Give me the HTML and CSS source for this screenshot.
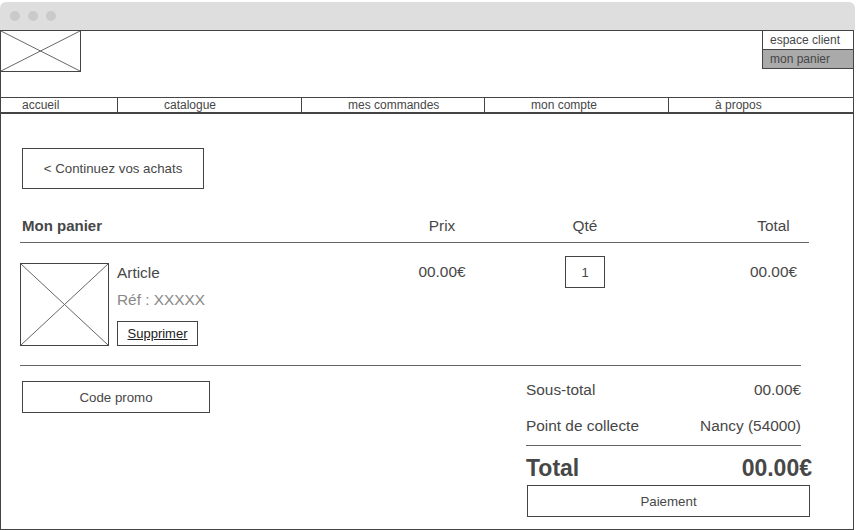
FILE: index.html
```html
<!DOCTYPE html>
<html lang="fr">
<head>
<meta charset="utf-8">
<title>Mon panier</title>
<link rel="stylesheet" href="styles.css">
</head>
<body>
<div class="titlebar">
  <span class="dot"></span><span class="dot"></span><span class="dot"></span>
</div>
<div class="frame">
  <header class="header">
    <div class="logo">
      <svg class="cross" viewBox="0 0 100 100" preserveAspectRatio="none"><line x1="0" y1="0" x2="100" y2="100"/><line x1="100" y1="0" x2="0" y2="100"/></svg>
    </div>
    <div class="account">
      <div class="account-item">espace client</div>
      <div class="account-item active">mon panier</div>
    </div>
  </header>
  <nav class="nav">
    <div class="nav-item first">accueil</div>
    <div class="nav-item">catalogue</div>
    <div class="nav-item">mes commandes</div>
    <div class="nav-item">mon compte</div>
    <div class="nav-item">à propos</div>
  </nav>
  <main class="main">
    <div class="btn btn-back">&lt; Continuez vos achats</div>
    <div class="cart-head">
      <div class="title">Mon panier</div>
      <div class="center">Prix</div>
      <div class="center">Qté</div>
      <div class="col-total">Total</div>
    </div>
    <div class="cart-item">
      <div class="product">
        <div class="thumb">
          <svg class="cross" viewBox="0 0 100 100" preserveAspectRatio="none"><line x1="0" y1="0" x2="100" y2="100"/><line x1="100" y1="0" x2="0" y2="100"/></svg>
        </div>
        <div class="details">
          <div class="name">Article</div>
          <div class="ref">Réf : XXXXX</div>
          <div class="btn btn-del"><span class="u">Supprimer</span></div>
        </div>
      </div>
      <div class="price center">00.00€</div>
      <div class="qty-cell"><div class="qty">1</div></div>
      <div class="price col-total">00.00€</div>
    </div>
    <div class="divider"></div>
    <div class="cart-foot">
      <div class="btn btn-promo">Code promo</div>
      <div class="summary">
        <div class="sum-rows">
          <div class="sum-row"><span>Sous-total</span><span>00.00€</span></div>
          <div class="sum-row"><span>Point de collecte</span><span>Nancy (54000)</span></div>
        </div>
        <div class="sum-total"><span>Total</span><span>00.00€</span></div>
        <div class="btn btn-pay">Paiement</div>
      </div>
    </div>
  </main>
</div>
</body>
</html>
```
FILE: styles.css
```css
* { box-sizing: border-box; }
html, body { margin: 0; padding: 0; }
body {
  width: 856px;
  height: 530px;
  overflow: hidden;
  background: #fff;
  color: #474747;
  font-family: "Liberation Sans", Arial, Helvetica, sans-serif;
}
.titlebar {
  margin-top: 2px;
  width: 855px;
  height: 28px;
  background: #dedede;
  border-radius: 6px 6px 0 0;
  display: flex;
  align-items: center;
  gap: 8px;
  padding-left: 10px;
}
.dot {
  width: 10px;
  height: 10px;
  border-radius: 50%;
  background: #cacaca;
}
.frame {
  width: 854px;
  height: 500px;
  border: 1px solid #444;
  overflow: hidden;
}
.header {
  height: 66px;
  display: flex;
  justify-content: space-between;
  align-items: flex-start;
}
.logo {
  width: 80px;
  height: 41px;
  border-right: 1px solid #444;
  border-bottom: 1px solid #444;
}
.cross { display: block; width: 100%; height: 100%; }
.cross line { stroke: #666; stroke-width: 1; vector-effect: non-scaling-stroke; }
.account {
  width: 91px;
  border-left: 1px solid #444;
  border-bottom: 1px solid #444;
  font-size: 12px;
}
.account-item {
  height: 18px;
  line-height: 18px;
  padding-left: 7px;
}
.account-item.active {
  height: 19px;
  background: #aaa;
  border-top: 1px solid #444;
}
.nav {
  display: grid;
  grid-template-columns: 116px 184px 183px 184px 185px;
  border-top: 1px solid #444;
  border-bottom: 2px solid #444;
  font-size: 12px;
  line-height: 14px;
}
.nav-item {
  padding-left: 46px;
  border-left: 1px solid #444;
  white-space: nowrap;
}
.nav-item.first { padding-left: 21px; border-left: none; }
.main { padding: 34px 0 0 19px; }
.btn {
  border: 1px solid #444;
  background: #fff;
  font-size: 13.3px;
  display: flex;
  align-items: center;
  justify-content: center;
  color: #474747;
}
.btn-back { width: 182px; height: 41px; margin-left: 2px; }
.cart-head, .cart-item {
  display: grid;
  grid-template-columns: 372px 100px 186px 131px;
  width: 789px;
  font-size: 15.4px;
  line-height: 17px;
}
.cart-head {
  margin-top: 28px;
  padding-bottom: 8px;
  border-bottom: 1px solid #666;
}
.title { font-weight: bold; font-size: 15px; padding-left: 2px; }
.center { text-align: center; }
.col-total { text-align: center; padding-left: 60px; }
.product {
  display: flex;
  gap: 8px;
  padding: 20px 0 19px;
}
.thumb {
  width: 89px;
  height: 83px;
  border: 1px solid #444;
}
.details { padding-top: 1px; }
.ref { margin-top: 10px; color: #888; }
.btn-del {
  margin-top: 13px;
  width: 81px;
  height: 25px;
  font-size: 13px;
  color: #222;
}
.u { text-decoration: underline; }
.price { padding-top: 20px; }
.qty-cell { padding-top: 13px; display: flex; justify-content: center; }
.qty {
  width: 40px;
  height: 32px;
  border: 1px solid #444;
  font-size: 13px;
  display: flex;
  align-items: center;
  justify-content: center;
}
.divider { width: 781px; border-top: 1px solid #666; }
.cart-foot {
  display: flex;
  align-items: flex-start;
  padding-top: 15px;
}
.btn-promo { width: 188px; height: 32px; margin-left: 2px; }
.summary {
  margin-left: auto;
  margin-right: 41px;
  width: 286px;
}
.sum-rows {
  width: 275px;
  padding-bottom: 10px;
  border-bottom: 1px solid #666;
}
.sum-row {
  display: flex;
  justify-content: space-between;
  font-size: 15.4px;
  line-height: 17px;
}
.sum-row + .sum-row { margin-top: 19px; }
.sum-row:last-child { padding-bottom: 1px; }
.sum-total {
  display: flex;
  justify-content: space-between;
  margin-top: 9px;
  font-size: 23px;
  line-height: 26px;
  font-weight: bold;
}
.btn-pay { width: 283px; height: 32px; margin-top: 4px; margin-left: 1px; }
```
